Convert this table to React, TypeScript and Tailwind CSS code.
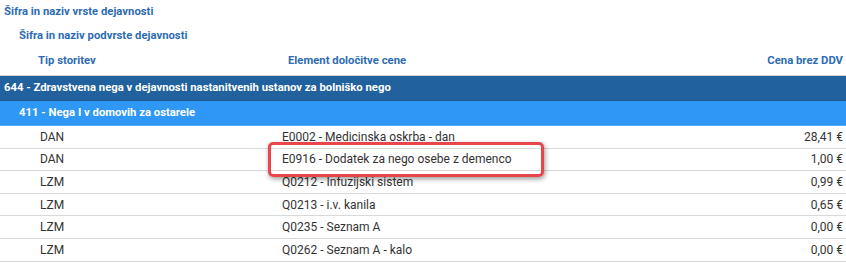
import React from "react";

const rows = [
  ["DAN", "E0002 - Medicinska oskrba - dan", "28,41 €"],
  ["DAN", "E0916 - Dodatek za nego osebe z demenco", "1,00 €"],
  ["LZM", "Q0212 - Infuzijski sistem", "0,99 €"],
  ["LZM", "Q0213 - i.v. kanila", "0,65 €"],
  ["LZM", "Q0235 - Seznam A", "0,00 €"],
  ["LZM", "Q0262 - Seznam A - kalo", "0,00 €"],
];

export default function App() {
  return (
    <div
      className="w-[846px] h-[264px] overflow-hidden bg-white relative text-[12px]"
      style={{ fontFamily: "Roboto, 'Liberation Sans', sans-serif" }}
    >
      <div className="h-[24px] flex items-center pl-[4px] font-bold text-[11.3px] text-[#2e6cb2]">
        Šifra in naziv vrste dejavnosti
      </div>
      <div className="h-[24px] flex items-center pl-[19px] font-bold text-[11.3px] text-[#2e6cb2]">
        Šifra in naziv podvrste dejavnosti
      </div>
      <div className="h-[28px] grid grid-cols-[282px_1fr_160px] items-center font-bold text-[11.3px] text-[#2e6cb2] border-b border-[#d4d4d4]">
        <div className="pl-[38px]">Tip storitev</div>
        <div className="pl-[6px]">Element določitve cene</div>
        <div className="text-right pr-[3px]">Cena brez DDV</div>
      </div>
      <div className="h-[25px] flex items-center pl-[4px] font-bold text-[11.3px] text-white bg-[#20619e] border-b border-[#1b578f]">
        644 - Zdravstvena nega v dejavnosti nastanitvenih ustanov za bolniško nego
      </div>
      <div className="h-[25px] flex items-center pl-[19px] font-bold text-[11.3px] text-white bg-[#2f97f5] border-b border-[#5aaef5]">
        411 - Nega I v domovih za ostarele
      </div>
      {rows.map((r, i) => (
        <div
          key={i}
          className="h-[22.6px] grid grid-cols-[282px_1fr_160px] items-center text-[#333333] border-b border-[#d9d9d9]"
        >
          <div className="pl-[40px]">{r[0]}</div>
          <div>{r[1]}</div>
          <div className="text-right pr-[3px]">{r[2]}</div>
        </div>
      ))}
      <div className="absolute left-[268px] top-[142px] w-[276px] h-[35px] rounded-[5px] border-[3px] border-[#e8464b] shadow-[1px_2px_5px_rgba(0,0,0,0.4)]" />
    </div>
  );
}
